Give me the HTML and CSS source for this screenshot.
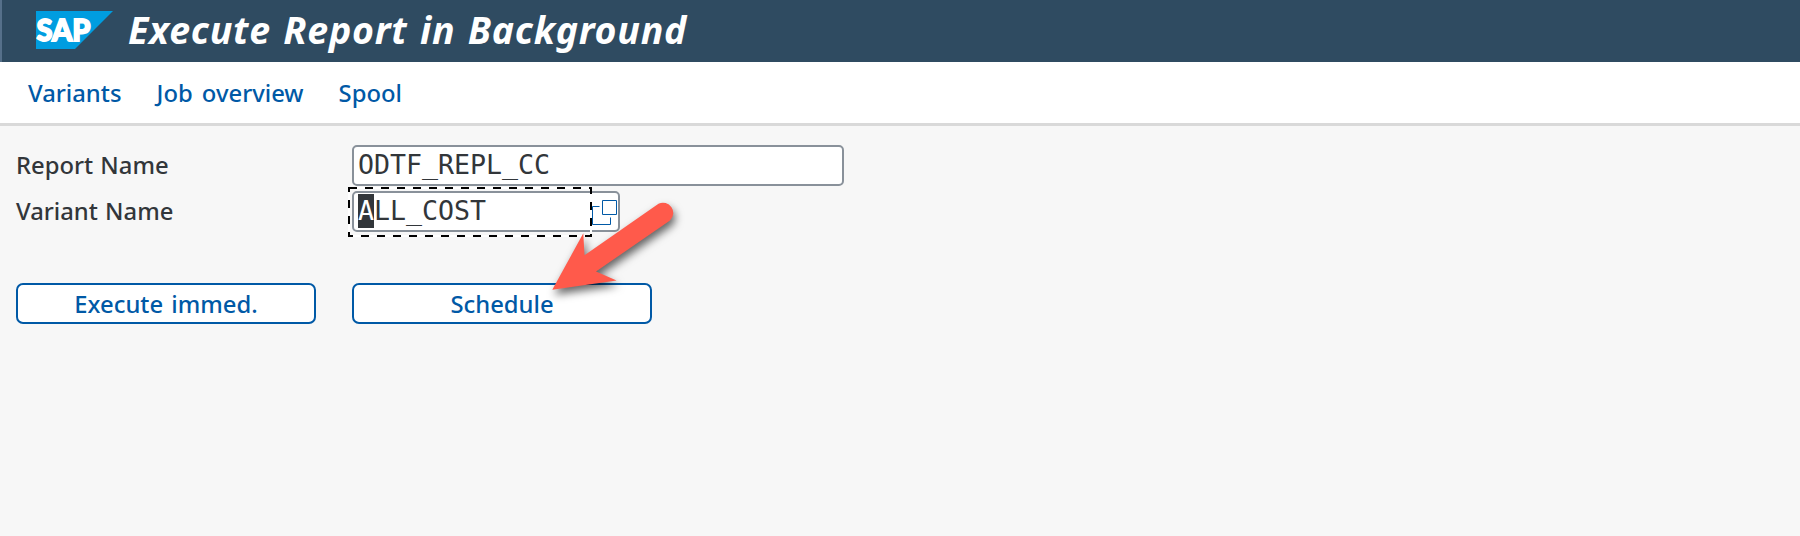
FILE: index.html
```html
<!DOCTYPE html>
<html lang="en">
<head>
<meta charset="utf-8">
<title>Execute Report in Background</title>
<link rel="stylesheet" href="styles.css">
</head>
<body>
<header class="titlebar">
  <svg class="logo" width="77" height="38" viewBox="0 0 77 38" role="img" aria-label="SAP">
    <path d="M0 0H77L39 38H0Z" fill="#009de0"/>
    <text class="logo-text" x="0.5" y="29.500" textLength="54" lengthAdjust="spacingAndGlyphs">SAP</text>
  </svg>
  <h1 class="title">Execute Report in Background</h1>
</header>
<nav class="toolbar">
  <a class="tool">Variants</a>
  <a class="tool tool-jobs">Job overview</a>
  <a class="tool">Spool</a>
</nav>
<main class="content">
  <div class="row">
    <label class="label">Report Name</label>
    <div class="field field-report"><span class="value">ODTF_REPL_CC</span></div>
  </div>
  <div class="row">
    <label class="label">Variant Name</label>
    <div class="field field-variant">
      <span class="value"><span class="caret">A</span>LL_COST</span>
      <svg class="focus" width="244" height="50" viewBox="0 0 244 50">
        <rect class="focus-base" x="1" y="1" width="242" height="48"/>
        <rect class="focus-dash" x="1" y="1" width="242" height="48"/>
      </svg>
      <svg class="help" width="26" height="26" viewBox="0 0 26 26">
        <path d="M7.500 6.500H.5V24.500H18.500V17.500M10.500 .5H24.500V14.500H10.500Z"/>
      </svg>
    </div>
  </div>
  <div class="actions">
    <button class="button button-exec">Execute immed.</button>
    <button class="button">Schedule</button>
  </div>
</main>
<svg class="arrow" width="150" height="110" viewBox="540 190 150 110">
  <path d="M552.300 289.700L583.300 233.300L584.500 255.300L658.500 203.700A10.300 10.300 0 0 1 670 220.500L596 271.500L616.600 280.500Z"/>
</svg>
</body>
</html>
```
FILE: styles.css
```css
* { box-sizing: border-box; }
html { background: #f7f7f7; }
body {
  margin: 0;
  height: 536px;
  overflow: hidden;
  color: #32363a;
  font-family: "Noto Sans", "Open Sans", sans-serif;
  font-size: 23.8px;
  font-weight: 500;
}
.titlebar {
  display: flex;
  align-items: flex-start;
  height: 62px;
  padding: 11px 0 0 34px;
  border-left: 2px solid #56708a;
  background: #2f4b61;
}
.logo-text {
  font: 900 31px "Lato", sans-serif;
  fill: #fff;
  stroke: #fff;
  stroke-width: 1.8;
}
.title {
  margin: -6px 0 0 15px;
  font-size: 37.5px;
  line-height: 50px;
  font-weight: 700;
  font-style: italic;
  letter-spacing: .75px;
  word-spacing: 2px;
  color: #fff;
  white-space: nowrap;
}
.toolbar {
  display: flex;
  height: 64px;
  padding-left: 28px;
  gap: 35px;
  background: #fff;
  border-bottom: 3px solid #d9d9d9;
  line-height: 62px;
  color: #0059a6;
}
.tool-jobs { word-spacing: 3px; }
.content { padding: 19px 0 0 16px; }
.row { display: flex; height: 46px; }
.label { width: 336px; line-height: 40px; word-spacing: 1px; }
.field {
  position: relative;
  height: 41px;
  padding: 1px 4px;
  border: 2px solid #89919a;
  border-radius: 5px;
  background: #fff;
}
.field-report { width: 492px; }
.field-variant { width: 268px; }
.value {
  font-family: "DejaVu Sans Mono", monospace;
  font-size: 26.6px;
  font-weight: 400;
  line-height: 34px;
  display: block;
}
.caret { display: inline-block; background: #32363a; color: #fff; }
.focus { position: absolute; left: -6px; top: -6px; fill: none; stroke-width: 2; }
.focus-base { stroke: #fff; }
.focus-dash { stroke: #000; stroke-dasharray: 8 8; }
.help { position: absolute; left: 238px; top: 7px; fill: none; stroke: #0059a6; stroke-width: 1; }
.actions { display: flex; gap: 36px; margin-top: 46px; }
.button {
  width: 300px;
  height: 41px;
  padding: 0;
  border: 2px solid #0059a6;
  border-radius: 7px;
  background: #fff;
  color: #0059a6;
  font: inherit;
}
.button-exec { word-spacing: 2px; }
.arrow {
  position: absolute;
  left: 540px;
  top: 190px;
  fill: #ff5a4b;
  filter: drop-shadow(2px 5px 4px rgba(0,0,0,.6));
}
```
